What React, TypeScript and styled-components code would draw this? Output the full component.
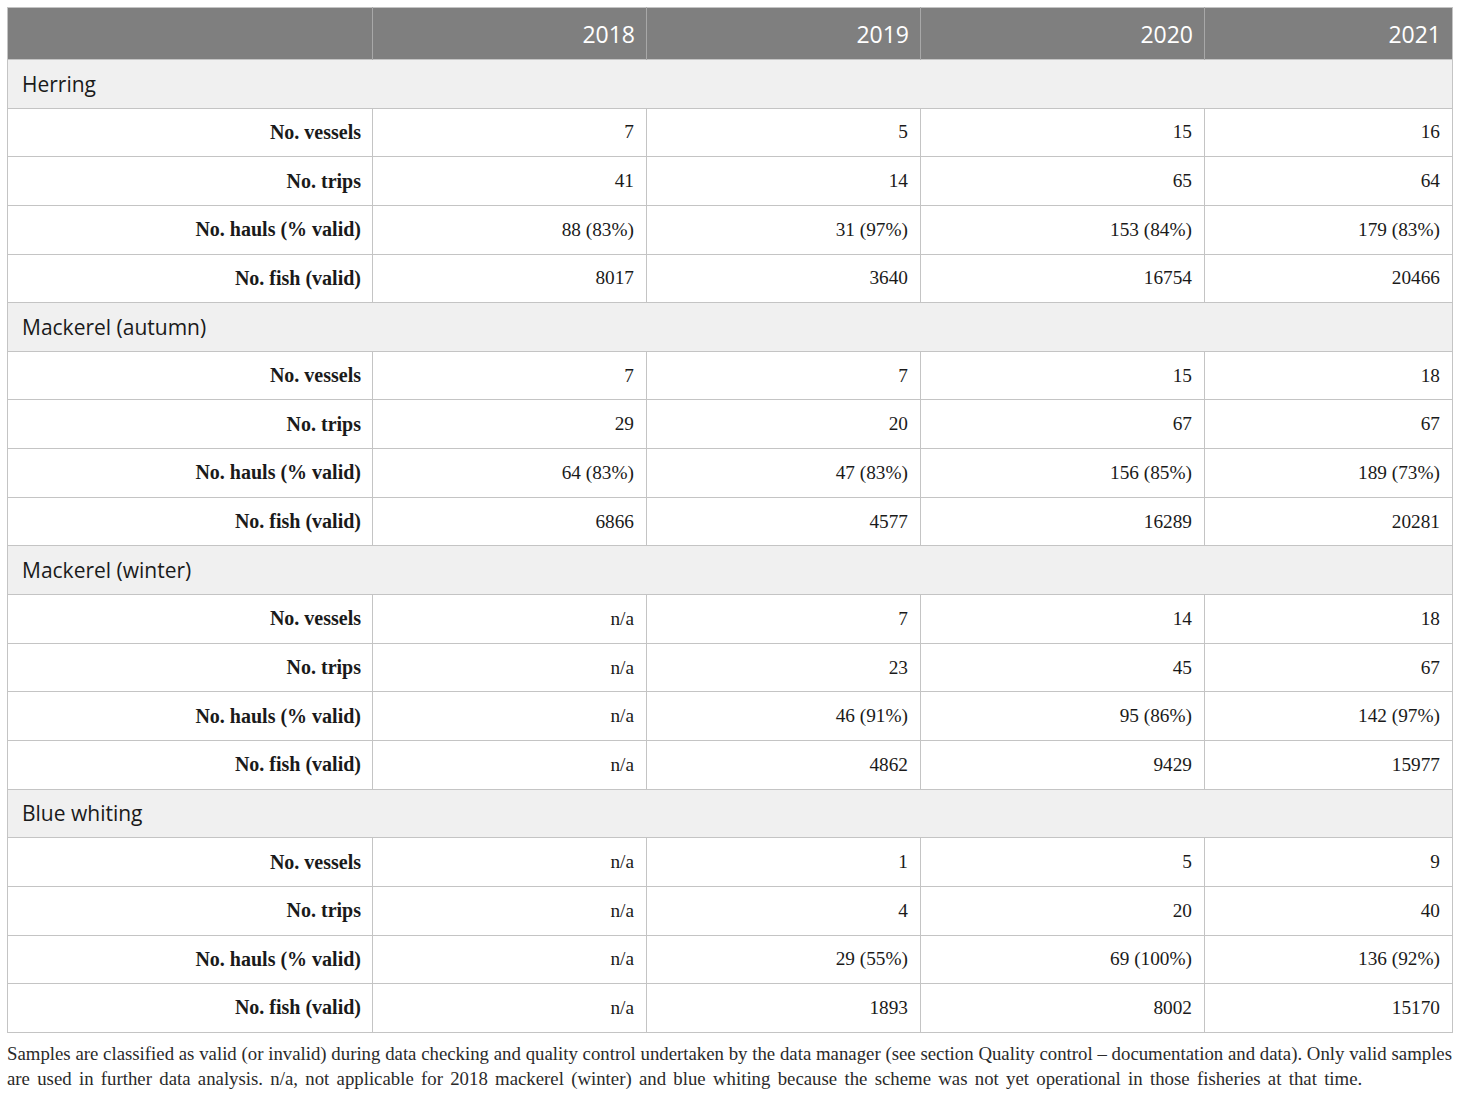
import React from "react";
import styled, { createGlobalStyle } from "styled-components";

const Global = createGlobalStyle`
  html, body { margin: 0; padding: 0; background: #ffffff; }
`;

const Page = styled.div`
  padding: 7px 8px 0 7px;
  width: 1445px;
`;

const Table = styled.table`
  width: 1445px;
  border-collapse: collapse;
  table-layout: fixed;
  border: 1px solid #c4c4c4;
`;

const HeadRow = styled.tr`
  height: 52px;
  background: #7f7f7f;
`;

const HeadCell = styled.th`
  color: #ffffff;
  font-family: "Open Sans", "Noto Sans", sans-serif;
  font-weight: 400;
  font-size: 23px;
  text-align: right;
  padding: 0 11px 0 12px;
  border-left: 1px solid #a8a8a8;
  &:first-child { border-left: none; }
`;

const GroupRow = styled.tr`
  height: 48.65px;
  background: #f0f0f0;
  border-top: 1px solid #c4c4c4;
`;

const GroupCell = styled.td`
  font-family: "Open Sans", "Noto Sans", sans-serif;
  font-size: 21px;
  color: #1a1a1a;
  padding: 0 14px;
  text-align: left;
`;

const DataRow = styled.tr`
  height: 48.65px;
  border-top: 1px solid #c4c4c4;
`;

const LabelCell = styled.td`
  font-family: "Liberation Serif", "DejaVu Serif", serif;
  font-weight: 700;
  font-size: 20px;
  color: #1a1a1a;
  text-align: right;
  padding: 0 11px;
`;

const ValueCell = styled.td`
  font-family: "Liberation Serif", "DejaVu Serif", serif;
  font-size: 19.3px;
  color: #1a1a1a;
  text-align: right;
  padding: 0 12px;
  border-left: 1px solid #c4c4c4;
`;

const Note = styled.p`
  margin: 8px 0 0 0;
  font-family: "Liberation Serif", "DejaVu Serif", serif;
  font-size: 18.8px;
  line-height: 25px;
  color: #2a2a2a;
`;

const NoteLine = styled.span<{ $justify?: boolean }>`
  display: block;
  white-space: nowrap;
  text-align: ${(p) => (p.$justify ? "justify" : "left")};
  text-align-last: ${(p) => (p.$justify ? "justify" : "left")};
  word-spacing: ${(p) => (p.$justify ? "0" : "2.6px")};
`;

type Group = { name: string; rows: [string, string[]][] };

const labels = ["No. vessels", "No. trips", "No. hauls (% valid)", "No. fish (valid)"];

const groups: Group[] = [
  {
    name: "Herring",
    rows: [
      [labels[0], ["7", "5", "15", "16"]],
      [labels[1], ["41", "14", "65", "64"]],
      [labels[2], ["88 (83%)", "31 (97%)", "153 (84%)", "179 (83%)"]],
      [labels[3], ["8017", "3640", "16754", "20466"]],
    ],
  },
  {
    name: "Mackerel (autumn)",
    rows: [
      [labels[0], ["7", "7", "15", "18"]],
      [labels[1], ["29", "20", "67", "67"]],
      [labels[2], ["64 (83%)", "47 (83%)", "156 (85%)", "189 (73%)"]],
      [labels[3], ["6866", "4577", "16289", "20281"]],
    ],
  },
  {
    name: "Mackerel (winter)",
    rows: [
      [labels[0], ["n/a", "7", "14", "18"]],
      [labels[1], ["n/a", "23", "45", "67"]],
      [labels[2], ["n/a", "46 (91%)", "95 (86%)", "142 (97%)"]],
      [labels[3], ["n/a", "4862", "9429", "15977"]],
    ],
  },
  {
    name: "Blue whiting",
    rows: [
      [labels[0], ["n/a", "1", "5", "9"]],
      [labels[1], ["n/a", "4", "20", "40"]],
      [labels[2], ["n/a", "29 (55%)", "69 (100%)", "136 (92%)"]],
      [labels[3], ["n/a", "1893", "8002", "15170"]],
    ],
  },
];

const widths = [365, 274, 274, 284, 248];

export default function App() {
  return (
    <>
      <Global />
      <Page>
        <Table>
          <colgroup>
            {widths.map((w, i) => (
              <col key={i} style={{ width: w }} />
            ))}
          </colgroup>
          <thead>
            <HeadRow>
              <HeadCell />
              <HeadCell>2018</HeadCell>
              <HeadCell>2019</HeadCell>
              <HeadCell>2020</HeadCell>
              <HeadCell>2021</HeadCell>
            </HeadRow>
          </thead>
          <tbody>
            {groups.map((g) => (
              <React.Fragment key={g.name}>
                <GroupRow>
                  <GroupCell colSpan={5}>{g.name}</GroupCell>
                </GroupRow>
                {g.rows.map(([label, vals]) => (
                  <DataRow key={label}>
                    <LabelCell>{label}</LabelCell>
                    {vals.map((v, i) => (
                      <ValueCell key={i}>{v}</ValueCell>
                    ))}
                  </DataRow>
                ))}
              </React.Fragment>
            ))}
          </tbody>
        </Table>
        <Note>
          <NoteLine $justify>
            Samples are classified as valid (or invalid) during data checking and quality control undertaken by the data
            manager (see section Quality control – documentation and data). Only valid samples
          </NoteLine>
          <NoteLine>
            are used in further data analysis. n/a, not applicable for 2018 mackerel (winter) and blue whiting because the
            scheme was not yet operational in those fisheries at that time.
          </NoteLine>
        </Note>
      </Page>
    </>
  );
}
